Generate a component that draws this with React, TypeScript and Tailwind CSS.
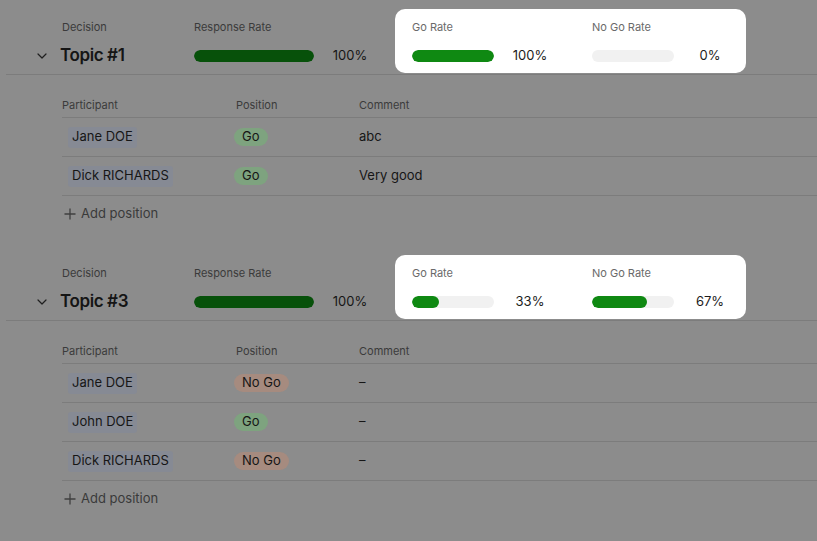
import React from "react";

type Row = { name: string; position: "Go" | "No Go"; comment: string };

type Topic = {
  title: string;
  response: number;
  go: number;
  noGo: number;
  rows: Row[];
};

const topics: Topic[] = [
  {
    title: "Topic #1",
    response: 100,
    go: 100,
    noGo: 0,
    rows: [
      { name: "Jane DOE", position: "Go", comment: "abc" },
      { name: "Dick RICHARDS", position: "Go", comment: "Very good" },
    ],
  },
  {
    title: "Topic #3",
    response: 100,
    go: 33,
    noGo: 67,
    rows: [
      { name: "Jane DOE", position: "No Go", comment: "–" },
      { name: "John DOE", position: "Go", comment: "–" },
      { name: "Dick RICHARDS", position: "No Go", comment: "–" },
    ],
  },
];

function Bar({
  value,
  fill,
  track,
  width,
}: {
  value: number;
  fill: string;
  track: string;
  width: string;
}) {
  return (
    <div className={`h-3 shrink-0 rounded-full overflow-hidden ${width} ${track}`}>
      <div className={`h-full rounded-full ${fill}`} style={{ width: `${value}%` }} />
    </div>
  );
}

function Chevron() {
  return (
    <svg width="10" height="6" viewBox="0 0 10 6" fill="none">
      <path d="M1 1l4 4 4-4" stroke="#1f1f1f" strokeWidth="1.2" strokeLinecap="round" strokeLinejoin="round" />
    </svg>
  );
}

function Plus() {
  return (
    <svg width="12" height="12" viewBox="0 0 12 12" fill="none">
      <path d="M6 0.5v11M0.5 6h11" stroke="#3f3f3f" strokeWidth="1.3" />
    </svg>
  );
}

function PositionPill({ position }: { position: Row["position"] }) {
  const color = position === "Go" ? "bg-[#7ea37f]" : "bg-[#a68b7f]";
  return (
    <span className={`inline-flex h-[18px] items-center rounded-full px-2 text-[13px] text-[#161616] ${color}`}>
      {position}
    </span>
  );
}

function TopicSection({ topic }: { topic: Topic }) {
  return (
    <section className="h-[246px]">
      <div className="flex h-[75px] border-b border-[#7c7c7c] ml-[6px]">
        <div className="w-[56px] shrink-0 flex flex-col">
          <div className="h-[42px]" />
          <div className="h-[28px] flex items-center justify-end pr-[15px]">
            <Chevron />
          </div>
        </div>
        <div className="w-[132px] shrink-0 flex flex-col">
          <div className="h-[42px] flex items-center pt-[12px] text-[11px] text-[#3b3b3b]">Decision</div>
          <div className="h-[28px] -ml-[2px] flex items-center text-[17px] font-semibold tracking-[-0.4px] text-[#151515]">
            {topic.title}
          </div>
        </div>
        <div className="w-[201px] shrink-0 flex flex-col">
          <div className="h-[42px] flex items-center pt-[12px] text-[11px] text-[#3b3b3b]">Response Rate</div>
          <div className="h-[28px] flex items-center">
            <Bar value={topic.response} fill="bg-[#07510a]" track="bg-[#7f7f7f]" width="w-[120px]" />
            <span className="w-[72px] text-center text-[13px] text-[#161616]">{topic.response}%</span>
          </div>
        </div>
        <div className="mt-[9px] h-[64px] w-[351px] shrink-0 rounded-[10px] bg-white pl-[17px] flex">
          {[
            { label: "Go Rate", value: topic.go, w: "w-[180px]" },
            { label: "No Go Rate", value: topic.noGo, w: "w-[154px]" },
          ].map((c) => (
            <div key={c.label} className={`${c.w} shrink-0 flex flex-col`}>
              <div className="h-[33px] flex items-center pt-[3px] text-[11px] text-[#6a6a6a]">{c.label}</div>
              <div className="h-[28px] flex items-center">
                <Bar value={c.value} fill="bg-[#0f8912]" track="bg-[#f1f1f1]" width="w-[82px]" />
                <span className="w-[72px] text-center text-[13px] text-[#1c1c1c]">{c.value}%</span>
              </div>
            </div>
          ))}
        </div>
      </div>
      <div className="ml-[62px]">
        <div className="h-[43px] flex items-end pb-[4px] border-b border-[#7c7c7c] text-[11px] text-[#3b3b3b]">
          <div className="w-[174px]">Participant</div>
          <div className="w-[123px]">Position</div>
          <div>Comment</div>
        </div>
        {topic.rows.map((r, i) => (
          <div key={i} className="h-[39px] flex items-center border-b border-[#7c7c7c] text-[13px] text-[#161616]">
            <div className="w-[172px] pl-[6px]">
              <span className="inline-flex h-[21px] items-center rounded-[3px] bg-[#868a94] px-1">{r.name}</span>
            </div>
            <div className="w-[125px]">
              <PositionPill position={r.position} />
            </div>
            <div>{r.comment}</div>
          </div>
        ))}
        <div className="h-[35px] flex items-center gap-[5px] pl-[2px] text-[13px] text-[#3a3a3a]">
          <Plus />
          <span>Add position</span>
        </div>
      </div>
    </section>
  );
}

export default function App() {
  return (
    <div className="w-[817px] h-[541px] overflow-hidden bg-[#8c8c8c]" style={{ fontFamily: "Inter, 'Noto Sans', sans-serif" }}>
      {topics.map((t) => (
        <TopicSection key={t.title} topic={t} />
      ))}
    </div>
  );
}
